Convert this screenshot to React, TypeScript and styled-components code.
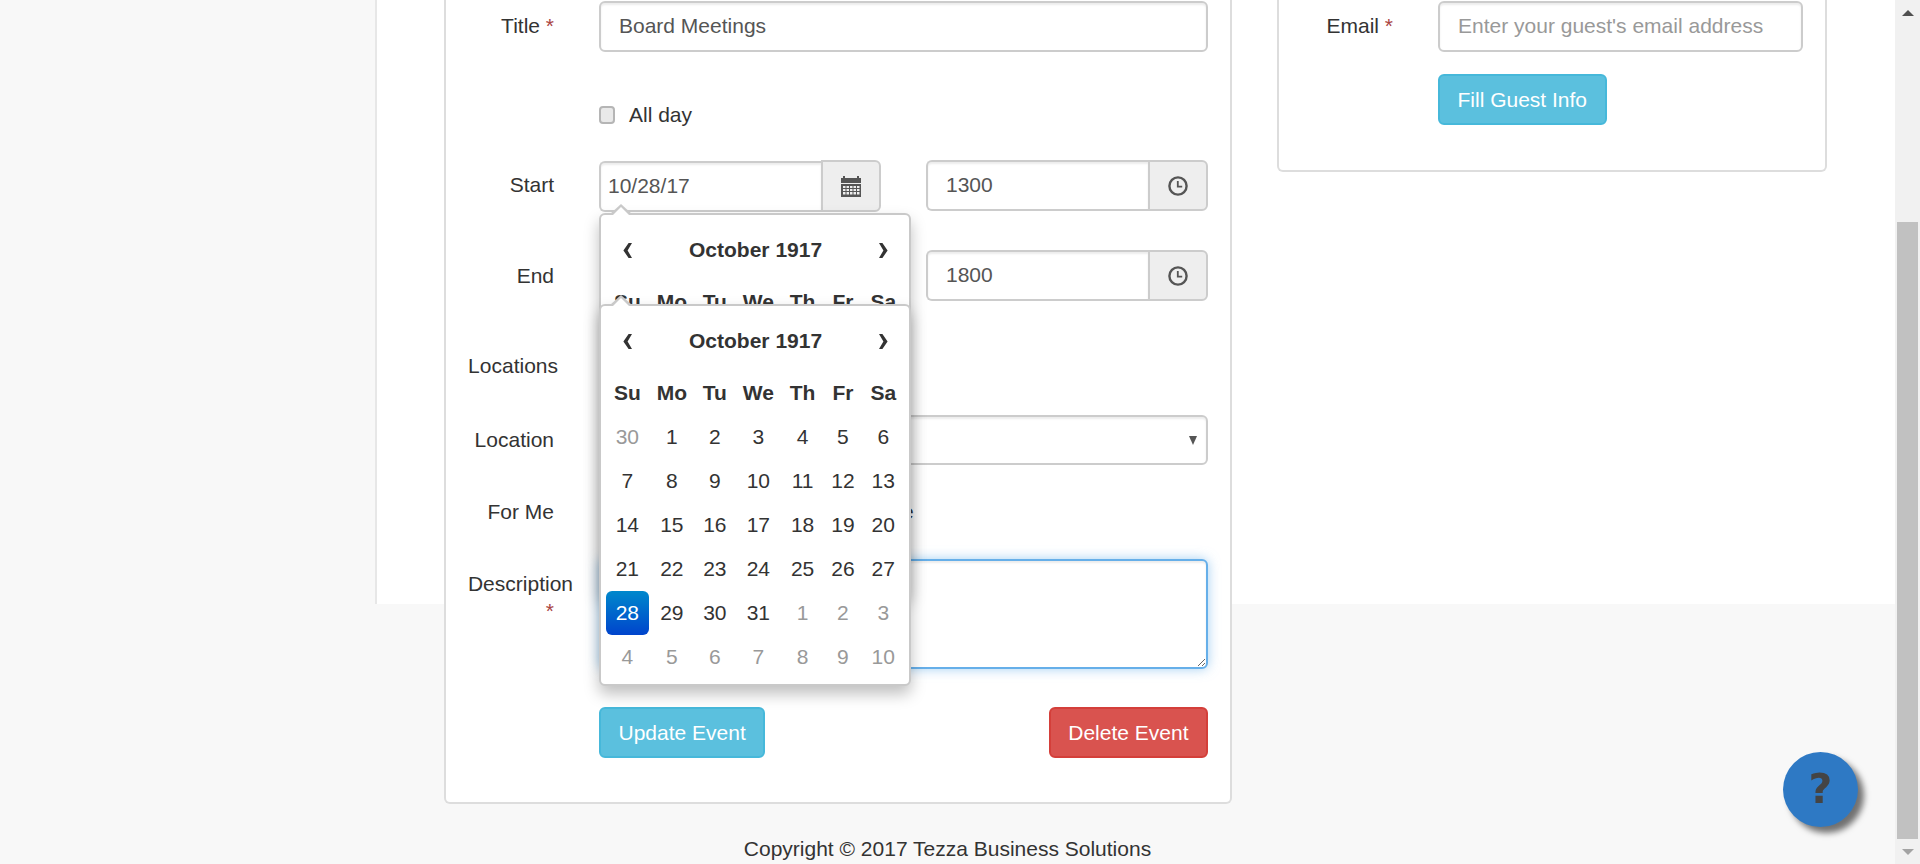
import React from 'react';
import styled, { createGlobalStyle } from 'styled-components';

const GlobalStyle = createGlobalStyle`
	html, body {
		margin: 0;
		padding: 0;
		height: 100%;
		overflow: hidden;
	}
	body {
		background: #f8f8f8;
		color: #333;
		font-family: 'Liberation Sans', Arial, sans-serif;
		font-size: 21px;
	}
	* {
		box-sizing: border-box;
	}
`;

const Shell = styled.div`
	display: flex;
	height: 864px;
	overflow: hidden;
`;

const Main = styled.main`
	flex: 1;
	min-width: 0;
`;

const Wrapper = styled.div`
	display: flex;
	align-items: flex-start;
	gap: 45px;
	height: 604px;
	margin-left: 375px;
	padding-left: 67px;
	background: #fff;
	border-left: 2px solid #e7e7e7;
`;

const Card = styled.section<{ $width: number }>`
	flex: none;
	width: ${(p) => p.$width}px;
	padding: 0 22px 44px 0;
	background: #fff;
	border: 2px solid #ddd;
	border-top: none;
	border-radius: 0 0 6px 6px;
`;

const Row = styled.div<{ $top: number; $labelWidth?: number; $align?: string }>`
	display: grid;
	grid-template-columns: ${(p) => p.$labelWidth ?? 108}px 1fr;
	column-gap: 45px;
	align-items: ${(p) => p.$align ?? 'center'};
	margin-top: ${(p) => p.$top}px;
`;

const Label = styled.label<{ $shift?: number; $lift?: boolean }>`
	display: block;
	line-height: 30px;
	text-align: right;
	white-space: nowrap;
	margin-right: ${(p) => -(p.$shift ?? 0)}px;
	margin-bottom: ${(p) => (p.$lift ? 2 : 0)}px;
`;

const DescriptionLabel = styled.label`
	display: block;
	padding-top: 11px;
	line-height: 27px;
	text-align: right;
	white-space: nowrap;
`;

const DescriptionLine = styled.span`
	display: block;
	margin-right: -19px;
`;

const Required = styled.span`
	color: #a94442;
`;

const inputLook = `
	height: 51px;
	padding: 8px 18px 10px;
	font: inherit;
	color: #555;
	background: #fff;
	border: 2px solid #ccc;
	border-radius: 6px;
	box-shadow: inset 0 2px 2px rgba(0, 0, 0, 0.075);
	outline: none;
	&::placeholder {
		color: #999;
		opacity: 1;
	}
`;

const TextInput = styled.input`
	${inputLook}
	display: block;
	width: 100%;
`;

const TwoGroups = styled.div`
	display: flex;
	gap: 45px;
`;

const InputGroup = styled.div`
	position: relative;
	display: flex;
	flex: none;
	width: 282px;
	height: 51px;
`;

const DateGroup = styled(InputGroup)`
	height: 52px;
`;

const GroupInput = styled.input<{ $date?: boolean }>`
	${inputLook}
	flex: 1;
	min-width: 0;
	border-right: none;
	border-radius: 6px 0 0 6px;
	padding-left: ${(p) => (p.$date ? 7 : 18)}px;
	margin-top: ${(p) => (p.$date ? 1 : 0)}px;
`;

const Addon = styled.span`
	display: flex;
	flex: none;
	align-items: center;
	justify-content: center;
	width: 60px;
	background: #eee;
	border: 2px solid #ccc;
	border-radius: 0 6px 6px 0;
	color: #555;
`;

const SelectBox = styled.div`
	display: flex;
	align-items: center;
	justify-content: flex-end;
	height: 50px;
	padding-right: 9px;
	background: #fff;
	border: 2px solid #ccc;
	border-radius: 6px;
	box-shadow: inset 0 2px 2px rgba(0, 0, 0, 0.075);
	&::after {
		content: '';
		border-top: 9px solid #555;
		border-left: 4.5px solid transparent;
		border-right: 4.5px solid transparent;
	}
`;

const CheckLine = styled.label`
	display: flex;
	align-items: center;
	gap: 14px;
	line-height: 30px;
	white-space: nowrap;
`;

const Check = styled.input`
	appearance: none;
	flex: none;
	width: 16px;
	height: 18px;
	margin: 0;
	background: #e9e9e9;
	border: 2px solid #b5b5b5;
	border-radius: 4px;
`;

const Description = styled.textarea`
	display: block;
	width: 100%;
	height: 110px;
	padding: 9px 18px;
	font: inherit;
	color: #555;
	border: 2px solid #66afe9;
	border-radius: 6px;
	outline: none;
	resize: vertical;
	box-shadow: inset 0 2px 2px rgba(0, 0, 0, 0.075), 0 0 12px rgba(102, 175, 233, 0.6);
`;

const Actions = styled.div`
	display: flex;
	justify-content: space-between;
`;

const Button = styled.button<{ $tone: 'info' | 'danger' }>`
	height: 51px;
	padding: 0 17.5px;
	font: inherit;
	color: #fff;
	background: ${(p) => (p.$tone === 'info' ? '#5bc0de' : '#d9534f')};
	border: 2px solid ${(p) => (p.$tone === 'info' ? '#46b8da' : '#d43f3a')};
	border-radius: 6px;
`;

const GuestButton = styled(Button)`
	display: block;
`;

const Popup = styled.div<{ $top: number }>`
	position: absolute;
	z-index: 2;
	top: ${(p) => p.$top}px;
	left: 0;
	width: 312px;
	padding: 4px 4px 5px 5px;
	background: #fff;
	border: 2px solid #c9c9c9;
	border-radius: 6px;
	box-shadow: 0 8px 15px rgba(0, 0, 0, 0.25);
	&::before {
		content: '';
		position: absolute;
		top: -11px;
		left: 9px;
		border-bottom: 10px solid #c9c9c9;
		border-left: 11px solid transparent;
		border-right: 11px solid transparent;
	}
	&::after {
		content: '';
		position: absolute;
		top: -8px;
		left: 11px;
		border-bottom: 9px solid #fff;
		border-left: 9px solid transparent;
		border-right: 9px solid transparent;
	}
`;

const CalendarTable = styled.table`
	width: 298px;
	border-collapse: collapse;
	border-spacing: 0;
`;

const Heading = styled.th`
	height: 61px;
	padding: 0 7.5px;
	font-weight: 700;
	text-align: center;
`;

const Arrow = styled.th<{ $left?: boolean }>`
	height: 61px;
	padding: 3px 0 0 ${(p) => (p.$left ? 2 : 0)}px;
	text-align: center;
`;

const WeekDay = styled.th`
	height: 44px;
	padding: 0 7.5px;
	font-weight: 700;
	text-align: center;
`;

const Day = styled.td<{ $muted?: boolean; $active?: boolean }>`
	height: 44px;
	padding: 0 7.5px;
	text-align: center;
	border-radius: 6px;
	color: ${(p) => (p.$active ? '#fff' : p.$muted ? '#999' : '#333')};
	background: ${(p) => (p.$active ? 'linear-gradient(to bottom, #0088cc, #0044cc)' : 'none')};
`;

const GuestCard = styled(Card)`
	padding-bottom: 45px;
`;

const GuestFooterRow = styled.div`
	margin: 22px 0 0 159px;
`;

const Footer = styled.footer`
	margin-top: 230px;
	line-height: 30px;
	text-align: center;
`;

const Scrollbar = styled.aside`
	display: flex;
	flex: none;
	flex-direction: column;
	width: 25px;
	height: 864px;
	background: #f1f1f1;
`;

const ScrollButton = styled.span<{ $down?: boolean }>`
	display: flex;
	flex: none;
	align-items: center;
	justify-content: center;
	height: 25px;
	&::after {
		content: '';
		border-left: 6px solid transparent;
		border-right: 6px solid transparent;
		${(p) => (p.$down ? 'border-top: 6px solid #a3a3a3;' : 'border-bottom: 6px solid #505050;')}
	}
`;

const ScrollTrack = styled.div`
	flex: 1;
	padding: 197px 2px 0;
`;

const ScrollThumb = styled.div`
	height: 100%;
	background: #c1c1c1;
`;

const HelpButton = styled.button`
	position: fixed;
	left: 1783px;
	top: 752px;
	display: flex;
	align-items: center;
	justify-content: center;
	width: 75px;
	height: 75px;
	padding: 0 0 2px;
	font-family: 'DejaVu Sans', sans-serif;
	font-size: 41px;
	font-weight: 700;
	color: #444;
	background: #2e79c4;
	border: none;
	border-radius: 50%;
	box-shadow: 6px 6px 6px rgba(0, 0, 0, 0.55);
`;

const weekDays = ['Su', 'Mo', 'Tu', 'We', 'Th', 'Fr', 'Sa'];

type Cell = { label: number; muted?: boolean; active?: boolean };

const weeks: Cell[][] = [
	[{ label: 30, muted: true }, { label: 1 }, { label: 2 }, { label: 3 }, { label: 4 }, { label: 5 }, { label: 6 }],
	[{ label: 7 }, { label: 8 }, { label: 9 }, { label: 10 }, { label: 11 }, { label: 12 }, { label: 13 }],
	[{ label: 14 }, { label: 15 }, { label: 16 }, { label: 17 }, { label: 18 }, { label: 19 }, { label: 20 }],
	[{ label: 21 }, { label: 22 }, { label: 23 }, { label: 24 }, { label: 25 }, { label: 26 }, { label: 27 }],
	[
		{ label: 28, active: true },
		{ label: 29 },
		{ label: 30 },
		{ label: 31 },
		{ label: 1, muted: true },
		{ label: 2, muted: true },
		{ label: 3, muted: true }
	],
	[
		{ label: 4, muted: true },
		{ label: 5, muted: true },
		{ label: 6, muted: true },
		{ label: 7, muted: true },
		{ label: 8, muted: true },
		{ label: 9, muted: true },
		{ label: 10, muted: true }
	]
];

const Chevron = ({ right }: { right?: boolean }) => (
	<svg width='10' height='15' viewBox='0 0 10 15' aria-hidden='true'>
		<path
			d={right ? 'M1 0h3.4L9.6 7.5 4.4 15H1l4.4-7.5z' : 'M9 0H5.6L.4 7.5 5.6 15H9L4.6 7.5z'}
			fill='#333'
		/>
	</svg>
);

const CalendarIcon = () => (
	<svg width='20' height='21' viewBox='0 0 20 21' aria-hidden='true'>
		<path
			fillRule='evenodd'
			fill='#555'
			d='M2 0h2v2h12V0h2v2h2v5H0V2h2zM0 8h20v13H0zM2 10v2h2.5v-2zM5.5 10v2H8v-2zM9 10v2h2.5v-2zM12.5 10v2H15v-2zM16 10v2h2.5v-2zM2 13v2h2.5v-2zM5.5 13v2H8v-2zM9 13v2h2.5v-2zM12.5 13v2H15v-2zM16 13v2h2.5v-2zM2 16v2.5h2.5V16zM5.5 16v2.5H8V16zM9 16v2.5h2.5V16zM12.5 16v2.5H15V16zM16 16v2.5h2.5V16z'
		/>
	</svg>
);

const ClockIcon = () => (
	<svg width='20' height='20' viewBox='0 0 20 20' aria-hidden='true'>
		<circle cx='10' cy='10' r='8.6' fill='none' stroke='#555' strokeWidth='2.4' />
		<path d='M9.8 5v5.6h4.4' fill='none' stroke='#555' strokeWidth='1.8' />
	</svg>
);

const DatePopup = ({ top }: { top: number }) => (
	<Popup $top={top}>
		<CalendarTable>
			<thead>
				<tr>
					<Arrow $left>
						<Chevron />
					</Arrow>
					<Heading colSpan={5}>October 1917</Heading>
					<Arrow>
						<Chevron right />
					</Arrow>
				</tr>
				<tr>
					{weekDays.map((name) => (
						<WeekDay key={name}>{name}</WeekDay>
					))}
				</tr>
			</thead>
			<tbody>
				{weeks.map((week, index) => (
					<tr key={index}>
						{week.map((cell) => (
							<Day
								key={`${cell.label}-${cell.muted ? 'm' : 'c'}`}
								$muted={cell.muted}
								$active={cell.active}
							>
								{cell.label}
							</Day>
						))}
					</tr>
				))}
			</tbody>
		</CalendarTable>
	</Popup>
);

const App = () => (
	<>
		<GlobalStyle />
		<Shell>
			<Main>
				<Wrapper>
					<Card $width={788}>
						<Row $top={1}>
							<Label $lift>
								Title <Required>*</Required>
							</Label>
							<TextInput
								readOnly
								value='Board Meetings'
							/>
						</Row>
						<Row $top={48}>
							<span />
							<CheckLine>
								<Check type='checkbox' />
								All day
							</CheckLine>
						</Row>
						<Row $top={30}>
							<Label $lift>Start</Label>
							<TwoGroups>
								<DateGroup>
									<GroupInput
										$date
										readOnly
										value='10/28/17'
									/>
									<Addon>
										<CalendarIcon />
									</Addon>
									<DatePopup top={53} />
								</DateGroup>
								<InputGroup>
									<GroupInput
										readOnly
										value='1300'
									/>
									<Addon>
										<ClockIcon />
									</Addon>
								</InputGroup>
							</TwoGroups>
						</Row>
						<Row $top={38}>
							<Label>End</Label>
							<TwoGroups>
								<DateGroup>
									<GroupInput
										$date
										readOnly
										value='10/28/17'
									/>
									<Addon>
										<CalendarIcon />
									</Addon>
									<DatePopup top={54} />
								</DateGroup>
								<InputGroup>
									<GroupInput
										readOnly
										value='1800'
									/>
									<Addon>
										<ClockIcon />
									</Addon>
								</InputGroup>
							</TwoGroups>
						</Row>
						<Row $top={49}>
							<Label $shift={4}>Locations</Label>
							<span />
						</Row>
						<Row $top={34}>
							<Label>Location</Label>
							<SelectBox />
						</Row>
						<Row $top={32}>
							<Label>For Me</Label>
							<CheckLine>
								<Check type='checkbox' />
								This event is only for me alone
							</CheckLine>
						</Row>
						<Row
							$top={32}
							$align='start'
						>
							<DescriptionLabel>
								<DescriptionLine>Description</DescriptionLine>
								<Required>*</Required>
							</DescriptionLabel>
							<Description readOnly />
						</Row>
						<Row $top={38}>
							<span />
							<Actions>
								<Button $tone='info'>Update Event</Button>
								<Button $tone='danger'>Delete Event</Button>
							</Actions>
						</Row>
					</Card>
					<GuestCard $width={550}>
						<Row
							$top={1}
							$labelWidth={114}
						>
							<Label $lift>
								Email <Required>*</Required>
							</Label>
							<TextInput placeholder="Enter your guest's email address" />
						</Row>
						<GuestFooterRow>
							<GuestButton $tone='info'>Fill Guest Info</GuestButton>
						</GuestFooterRow>
					</GuestCard>
				</Wrapper>
				<Footer>Copyright © 2017 Tezza Business Solutions</Footer>
			</Main>
			<Scrollbar>
				<ScrollButton />
				<ScrollTrack>
					<ScrollThumb />
				</ScrollTrack>
				<ScrollButton $down />
			</Scrollbar>
		</Shell>
		<HelpButton>?</HelpButton>
	</>
);

export default App;
